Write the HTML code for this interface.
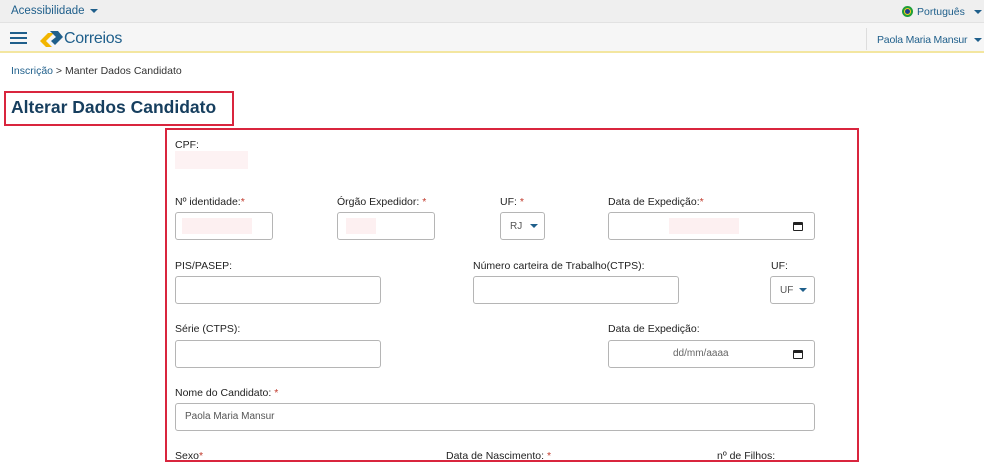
<!DOCTYPE html>
<html><head><meta charset="utf-8"><style>
*{box-sizing:border-box;margin:0;padding:0}
html,body{width:984px;height:462px;overflow:hidden}
body{background:#fff;font-family:"Liberation Sans","DejaVu Sans",sans-serif;font-size:11px;color:#333;position:relative}
.a{position:absolute;white-space:nowrap}
.top{left:0;top:0;width:984px;height:23px;background:#efefef;border-bottom:1px solid #e2e2e2}
.nav{left:0;top:23px;width:984px;height:30px;background:#f6f6f6;border-bottom:2px solid #f3e6a0}
.blue{color:#1f5f8b}
.caret{display:inline-block;width:0;height:0;border-left:4px solid transparent;border-right:4px solid transparent;border-top:4px solid #1f5f8b;vertical-align:middle;margin-left:5px}
.lbl{font-size:10.5px;color:#222}
.req{color:#c0392b}
.in{border:1px solid #b5b5b5;border-radius:3px;background:#fff;height:28px}
.sel{font-size:10px;color:#555;padding:8px 0 0 9px}
</style></head><body>
<div class="a top"></div>
<div class="a blue" style="left:11px;top:5px;font-size:11.5px">Acessibilidade<span class="caret"></span></div>
<div class="a" style="left:902px;top:6px;width:11px;height:11px;border-radius:50%;background:#1e9e3a"><div style="margin:3px;width:5px;height:5px;border-radius:50%;background:#1c3f8c;box-shadow:0 0 0 1px #f4d21f"></div></div>
<div class="a blue" style="left:917px;top:6px;font-size:10.5px">Português<span class="caret" style="margin-left:9px"></span></div>
<div class="a nav"></div>
<div class="a" style="left:10px;top:32px;width:17px;height:2px;background:#1f5f8b;box-shadow:0 5px 0 #1f5f8b,0 10px 0 #1f5f8b"></div>
<svg class="a" style="left:38px;top:29px" width="26" height="20" viewBox="0 0 26 20"><path d="M2 12 L10 4 L16 4 L8 12 L14 18 L8 18 Z" fill="#f2b500"/><path d="M12 2 L20 2 L25 8 L17 16 L13 12 L18 8 Z" fill="#1f5f8b"/></svg>
<div class="a" style="left:64px;top:30px;font-size:16px;color:#1f5f8b;letter-spacing:-0.3px">Correios</div>
<div class="a" style="left:866px;top:28px;width:1px;height:22px;background:#ddd"></div>
<div class="a blue" style="left:877px;top:34px;font-size:10.5px;letter-spacing:-0.2px">Paola Maria Mansur<span class="caret" style="margin-left:7px"></span></div>
<div class="a" style="left:11px;top:65px;font-size:10.5px"><span class="blue">Inscrição</span> &gt; Manter Dados Candidato</div>
<div class="a" style="left:4px;top:91px;width:230px;height:35px;border:2px solid #d9253e"></div>
<div class="a" style="left:11px;top:97px;font-size:17.5px;font-weight:bold;color:#163e5e">Alterar Dados Candidato</div>
<div class="a" style="left:165px;top:128px;width:694px;height:334px;border:2px solid #d9253e;border-bottom:none"></div>
<div class="a lbl" style="left:175px;top:139px">CPF:</div>
<div class="a" style="left:175px;top:151px;width:73px;height:18px;background:#fdf2f3"></div>

<div class="a lbl" style="left:175px;top:196px">Nº identidade:<span class="req">*</span></div>
<div class="a in" style="left:175px;top:212px;width:98px"><div style="margin:5px 6px;width:70px;height:16px;background:#fdf0f1"></div></div>
<div class="a lbl" style="left:337px;top:196px">Órgão Expedidor: <span class="req">*</span></div>
<div class="a in" style="left:337px;top:212px;width:98px"><div style="margin:5px 8px;width:30px;height:16px;background:#fdf0f1"></div></div>
<div class="a lbl" style="left:500px;top:196px">UF: <span class="req">*</span></div>
<div class="a in sel" style="left:500px;top:212px;width:45px">RJ<span class="caret" style="margin-left:8px"></span></div>
<div class="a lbl" style="left:608px;top:196px">Data de Expedição:<span class="req">*</span></div>
<div class="a in" style="left:608px;top:212px;width:207px"><div class="a" style="left:60px;top:5px;width:70px;height:16px;background:#fdf0f1"></div><div class="a" style="left:184px;top:9px;width:10px;height:9px;border:1.5px solid #222;border-top-width:3px;border-radius:1px"></div></div>

<div class="a lbl" style="left:175px;top:260px">PIS/PASEP:</div>
<div class="a in" style="left:175px;top:276px;width:206px"></div>
<div class="a lbl" style="left:473px;top:260px">Número carteira de Trabalho(CTPS):</div>
<div class="a in" style="left:473px;top:276px;width:206px"></div>
<div class="a lbl" style="left:771px;top:260px">UF:</div>
<div class="a in sel" style="left:770px;top:276px;width:45px">UF<span class="caret" style="margin-left:6px"></span></div>

<div class="a lbl" style="left:175px;top:323px">Série (CTPS):</div>
<div class="a in" style="left:175px;top:340px;width:206px"></div>
<div class="a lbl" style="left:608px;top:323px">Data de Expedição:</div>
<div class="a in" style="left:608px;top:340px;width:207px"><div class="a" style="left:64px;top:7px;font-size:10px;color:#666">dd/mm/aaaa</div><div class="a" style="left:184px;top:9px;width:10px;height:9px;border:1.5px solid #222;border-top-width:3px;border-radius:1px"></div></div>

<div class="a lbl" style="left:175px;top:387px">Nome do Candidato: <span class="req">*</span></div>
<div class="a in" style="left:175px;top:403px;width:640px"><div style="padding:7px 0 0 9px;font-size:10px;color:#555">Paola Maria Mansur</div></div>

<div class="a lbl" style="left:175px;top:450px">Sexo<span class="req">*</span></div>
<div class="a lbl" style="left:446px;top:450px">Data de Nascimento: <span class="req">*</span></div>
<div class="a lbl" style="left:717px;top:450px">nº de Filhos:</div>
<div class="a" style="left:165px;top:460px;width:694px;height:2px;background:#d9253e"></div>
</body></html>
